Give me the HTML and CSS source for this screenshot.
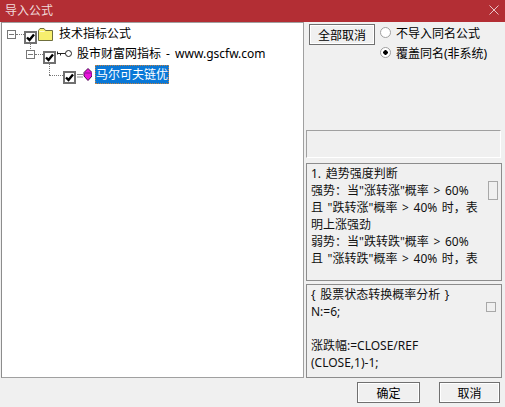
FILE: index.html
```html
<!DOCTYPE html>
<html lang="zh-CN">
<head>
    <meta charset="UTF-8">
    <title>导入公式</title>
    <link rel="stylesheet" href="styles.css">
</head>
<body>
    <div class="window">
        <div class="titlebar">
            <span class="title">导入公式</span>
            <svg class="close-icon" width="10" height="10" viewBox="0 0 10 10" fill="none" stroke="#e8c4c6" stroke-width="1">
                <path d="M0.5 0.5L9.5 9.5M9.5 0.5L0.5 9.5"></path>
            </svg>
        </div>

        <div class="main">
            <div class="tree">
                <div class="tree-row">
                    <span class="expander"></span>
                    <span class="dots"></span>
                    <span class="check"><svg width="9" height="9" viewBox="0 0 9 9"><path d="M1 4.5L3.5 7L8 1.5" fill="none" stroke="#000" stroke-width="2.4"></path></svg></span>
                    <svg class="node-icon" width="15" height="13" viewBox="0 0 15 13">
                        <path d="M0.5 12.5V2.5L2 0.5H6L7.5 2.5H14.5V12.5Z" fill="#f7ef6e" stroke="#6f6f3c"></path>
                        <path d="M1.5 3.5H6.5" stroke="#fffbd0"></path>
                    </svg>
                    <span class="label">技术指标公式</span>
                </div>
                <div class="tree-row level-1">
                    <span class="expander"></span>
                    <span class="dots"></span>
                    <span class="check"><svg width="9" height="9" viewBox="0 0 9 9"><path d="M1 4.5L3.5 7L8 1.5" fill="none" stroke="#000" stroke-width="2.4"></path></svg></span>
                    <svg class="node-icon" width="15" height="13" viewBox="0 0 15 13">
                        <circle cx="11.5" cy="5.5" r="3" fill="#fff" stroke="#222"></circle>
                        <path d="M0.5 3.5V6.5M0.5 5.5H8.5M3.5 5.5V7.5" fill="none" stroke="#222"></path>
                    </svg>
                    <span class="label">股市财富网指标 - www.gscfw.com</span>
                </div>
                <div class="tree-row level-2">
                    <span class="check"><svg width="9" height="9" viewBox="0 0 9 9"><path d="M1 4.5L3.5 7L8 1.5" fill="none" stroke="#000" stroke-width="2.4"></path></svg></span>
                    <svg class="node-icon" width="15" height="13" viewBox="0 0 15 13">
                        <path d="M0 6.5H6M0 9H6" stroke="#888"></path>
                        <path d="M11 0.5L15 4.5V8L11 12.5L7 8V4.5Z" fill="#ea14dc" stroke="#4a0c50"></path>
                        <path d="M8 5H14" stroke="#8a1090"></path>
                    </svg>
                    <span class="label selected">马尔可夫链优</span>
                </div>
                <span class="line line-a"></span>
                <span class="line line-b"></span>
                <span class="line line-c"></span>
            </div>

            <div class="side">
                <div class="options">
                    <button class="btn btn-all">全部取消</button>
                    <div class="radios">
                        <label class="radio-row"><span class="radio"></span>不导入同名公式</label>
                        <label class="radio-row"><span class="radio on"></span>覆盖同名(非系统)</label>
                    </div>
                </div>
                <div class="status-box"></div>
                <div class="text-box box-note">
                    <div class="text-body">1. 趋势强度判断<br>强势：当"涨转涨"概率 &gt; 60%<br>且 "跌转涨"概率 &gt; 40% 时，表<br>明上涨强劲<br>弱势：当"跌转跌"概率 &gt; 60%<br>且 "涨转跌"概率 &gt; 40% 时，表</div>
                    <div class="scroll"><span class="thumb thumb-tall"></span></div>
                </div>
                <div class="text-box box-code">
                    <div class="text-body">{ 股票状态转换概率分析 }<br>N:=6;<br><br>涨跌幅:=CLOSE/REF<br>(CLOSE,1)-1;</div>
                    <div class="scroll"><span class="thumb thumb-small"></span></div>
                </div>
            </div>
        </div>

        <div class="footer">
            <button class="btn btn-ok">确定</button>
            <button class="btn btn-cancel">取消</button>
        </div>
    </div>
</body>
</html>
```

FILE: styles.css
```css
* {
    margin: 0;
    padding: 0;
    box-sizing: border-box;
}

body {
    font-family: "Noto Sans", "Noto Sans CJK SC", sans-serif;
    font-size: 12px;
    color: #000;
    background-color: #f0f0f0;
}

.window {
    width: 505px;
    height: 407px;
    display: flex;
    flex-direction: column;
    background-color: #f0f0f0;
    overflow: hidden;
}

.titlebar {
    height: 22px;
    flex: none;
    display: flex;
    align-items: center;
    justify-content: space-between;
    padding: 0 6px 2px 5px;
    background-color: #b32e34;
    color: #f0dadb;
    font-size: 12px;
}

.main {
    height: 356px;
    flex: none;
    display: flex;
}

.tree {
    position: relative;
    width: 303px;
    margin-left: 1px;
    padding: 1px 0 0 5px;
    background-color: #fff;
    border: 1px solid #a0a0a0;
    border-left-color: #8c8c8c;
    font-size: 12px;
}

.tree-row {
    height: 20px;
    display: flex;
    align-items: center;
}

.level-1 {
    margin-left: 19px;
}

.level-2 {
    margin-left: 56px;
}

.expander {
    width: 9px;
    height: 9px;
    flex: none;
    border: 1px solid #777;
    background: linear-gradient(#777, #777) center / 5px 1px no-repeat;
    background-color: #fff;
}

.dots {
    width: 8px;
    height: 1px;
    flex: none;
    border-top: 1px dotted #777;
}

.check {
    width: 13px;
    height: 13px;
    flex: none;
    display: flex;
    align-items: center;
    justify-content: center;
    margin-top: 6px;
    border: 2px solid #707070;
    background-color: #fff;
}

.node-icon {
    flex: none;
    margin-left: 1px;
}

.label {
    margin-left: 6px;
    line-height: 16px;
    white-space: nowrap;
}

.level-1 .label {
    margin-left: 5px;
    word-spacing: 2px;
}

.level-2 .label {
    margin-left: 3px;
}

.selected {
    height: 19px;
    padding: 0 1px;
    line-height: 19px;
    background-color: #0a78d7;
    color: #fff;
    outline: 1px dotted #c08040;
    outline-offset: -1px;
}

.line {
    position: absolute;
    display: block;
    border: 0 dotted #777;
}

.line-a {
    left: 28px;
    top: 20px;
    height: 8px;
    border-left-width: 1px;
}

.line-b {
    left: 47px;
    top: 40px;
    height: 12px;
    border-left-width: 1px;
}

.line-c {
    left: 47px;
    top: 52px;
    width: 14px;
    border-top-width: 1px;
}

.side {
    flex: 1;
    display: flex;
    flex-direction: column;
    padding: 0 3px 0 2px;
}

.options {
    height: 108px;
    flex: none;
    display: flex;
    gap: 5px;
    padding: 2px 0 0 3px;
}

.btn {
    font-family: inherit;
    font-size: 12px;
    color: #000;
    background-color: #f0f0f0;
    border: 1px solid #707070;
    box-shadow: inset 0 0 0 1px #fff;
}

.btn-all {
    width: 66px;
    height: 21px;
}

.radios {
    display: flex;
    flex-direction: column;
    gap: 7px;
    padding-top: 2px;
}

.radio-row {
    height: 13px;
    display: flex;
    align-items: center;
    gap: 5px;
    white-space: nowrap;
}

.radio {
    width: 11px;
    height: 11px;
    flex: none;
    border: 1px solid #a0a0a0;
    border-radius: 50%;
    background-color: #fff;
}

.radio.on {
    background: radial-gradient(circle, #000 0 2px, #fff 2.5px);
}

.status-box {
    width: 195px;
    height: 28px;
    flex: none;
    border: 1px solid #a0a0a0;
    border-bottom-color: #fff;
    border-right-color: #fff;
}

.text-box {
    display: flex;
    flex: none;
    width: 196px;
    border: 1px solid #8c8c8c;
    line-height: 17px;
    font-size: 12px;
    color: #111;
}

.box-note {
    height: 118px;
    margin-top: 5px;
}

.box-code {
    height: 94px;
    margin-top: 3px;
}

.text-body {
    width: 177px;
    padding: 1px 0 0 4px;
    overflow: hidden;
    white-space: nowrap;
    word-spacing: 1.5px;
}

.scroll {
    flex: 1;
    display: flex;
    justify-content: center;
    background-color: #f0f0f0;
}

.thumb {
    display: block;
    border: 1px solid #a8a8a8;
    background-color: #f0f0f0;
}

.thumb-tall {
    width: 10px;
    height: 19px;
    margin-top: 17px;
}

.thumb-small {
    width: 10px;
    height: 10px;
    margin: 17px 4px 0 0;
}

.footer {
    flex: 1;
    display: flex;
    justify-content: flex-end;
    gap: 19px;
    padding: 4px 5px 0 0;
}

.btn-ok {
    width: 63px;
    height: 21px;
}

.btn-cancel {
    width: 61px;
    height: 21px;
}
```
